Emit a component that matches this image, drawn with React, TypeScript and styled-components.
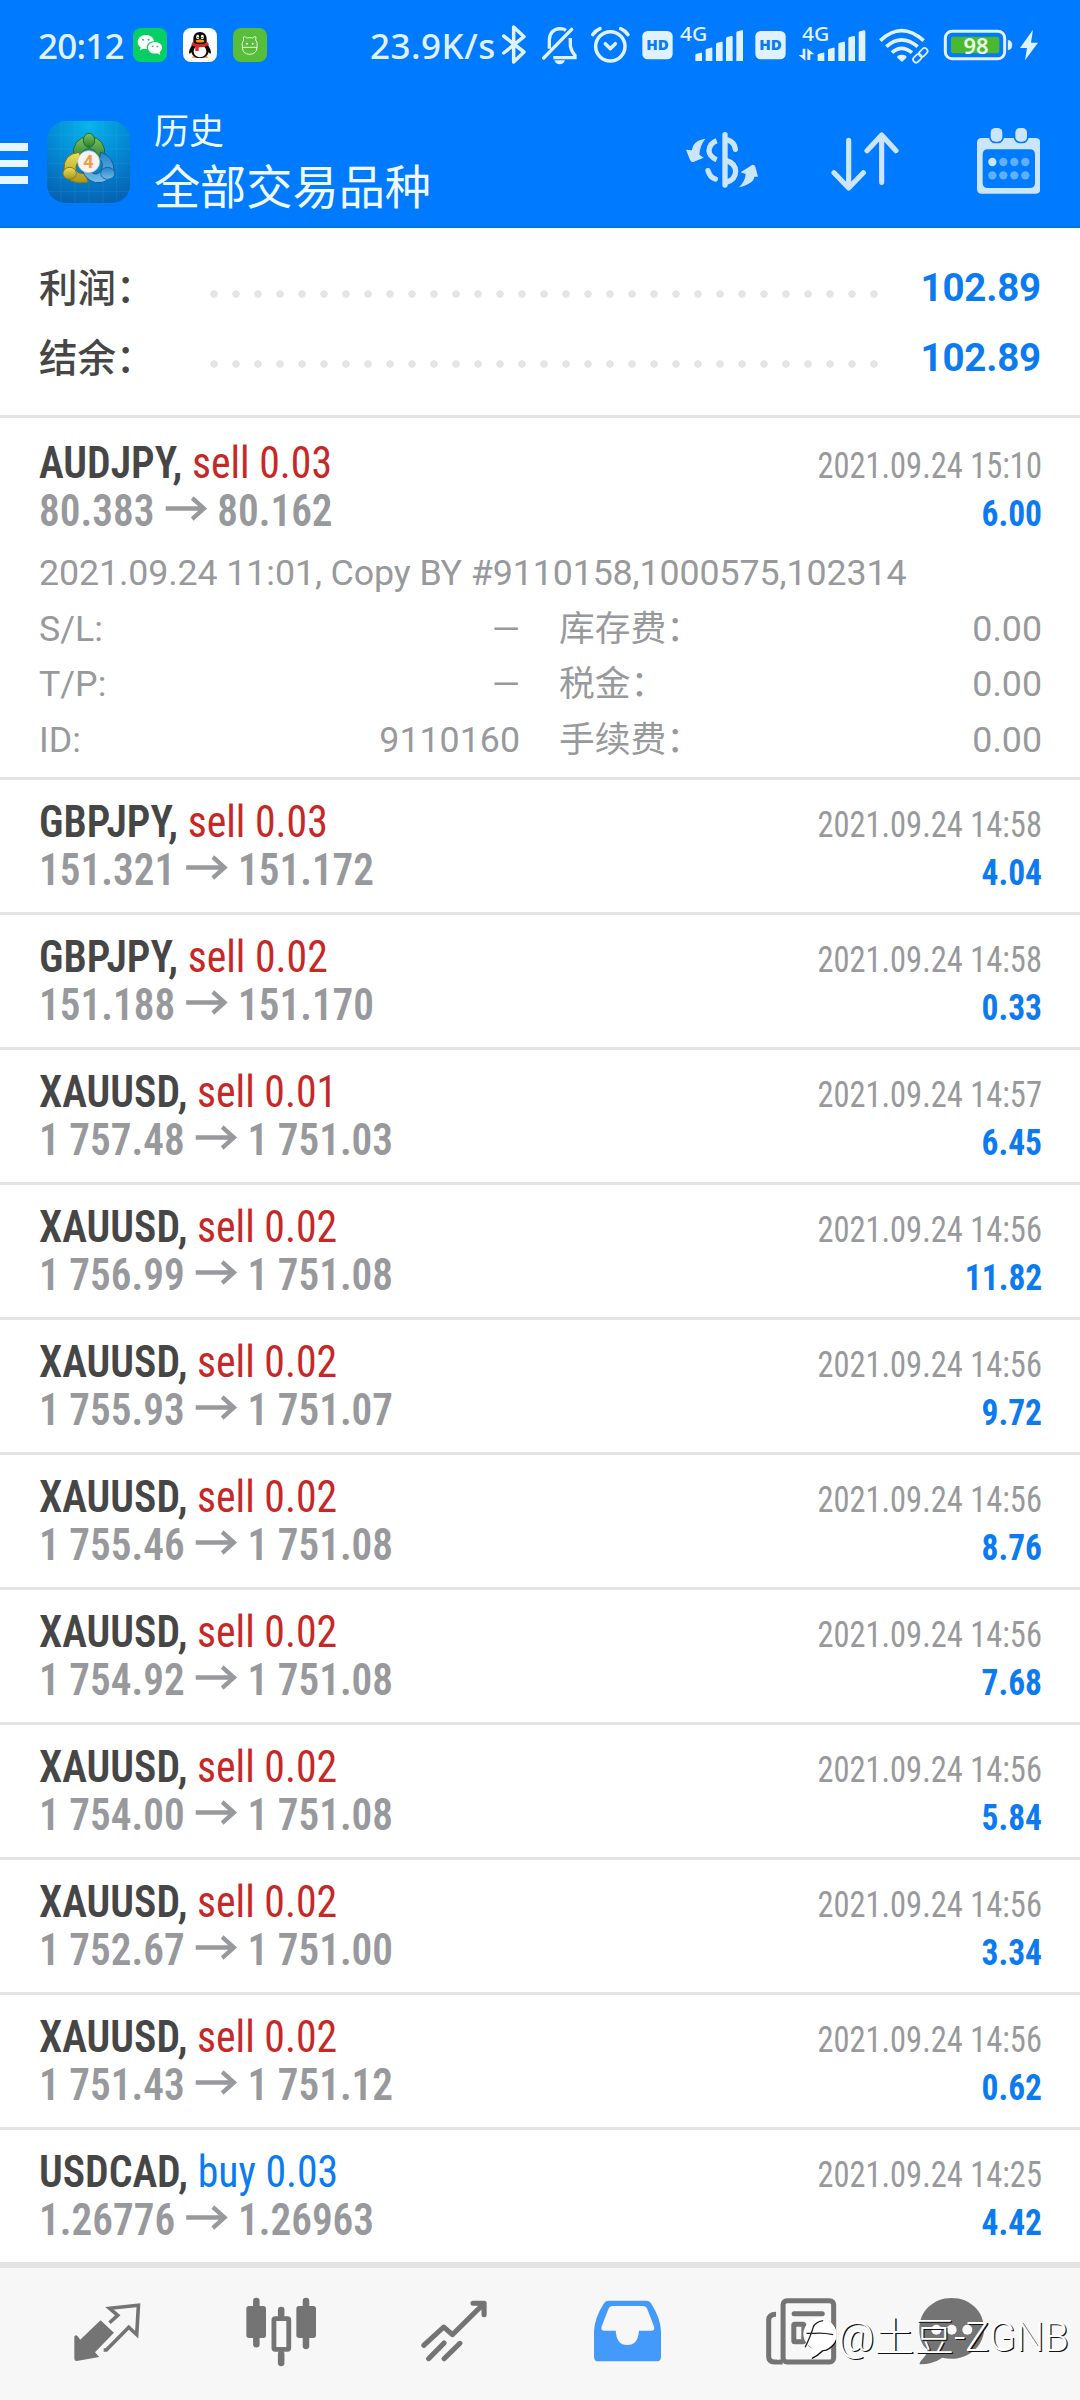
import React from 'react';
import styled, { createGlobalStyle } from 'styled-components';

const BLUE = '#007aff';
const INK = '#e0f2ff';
const TOOL = '#cce5ff';
const GREY = '#98999c';
const NAV = '#747474';

const Global = createGlobalStyle`
  *{box-sizing:border-box}
  body{margin:0;background:#fff}
  svg{display:block;flex:none}
`;

const Screen = styled.div`
  position: relative;
  width: 1080px;
  height: 2400px;
  display: flex;
  flex-direction: column;
  overflow: hidden;
  background: #fff;
  font-family: Roboto, 'Noto Sans CJK SC', sans-serif;
`;

const Header = styled.header`
  height: 228px;
  flex: none;
  background: ${BLUE};
  border-bottom: 2px solid #0073e6;
`;

const StatusBar = styled.div`
  height: 92px;
  padding: 24px 0 0 38px;
  display: flex;
  align-items: flex-start;
  font-family: 'Noto Sans', sans-serif;
  color: ${INK};
`;

const StatusText = styled.div<{ $w: number; $ml?: number; $ls?: number }>`
  width: ${p => p.$w}px;
  margin-left: ${p => p.$ml ?? 0}px;
  letter-spacing: ${p => p.$ls ?? 0}px;
  font-size: 35px;
  font-weight: 500;
  line-height: 44px;
  white-space: nowrap;
`;

const Glyph = styled.svg<{ $ml?: number }>`
  height: 42px;
  margin-left: ${p => p.$ml ?? 0}px;
  overflow: visible;
`;

const AppBar = styled.div`
  height: 134px;
  display: flex;
  align-items: flex-start;
`;

const Burger = styled.div`
  width: 28px;
  margin-top: 51px;
  display: flex;
  flex-direction: column;
  gap: 9px;
`;
const BurgerLine = styled.span`
  height: 7.6px;
  background: #e6f6ff;
`;

const Logo = styled.svg`
  margin: 29px 0 0 18.5px;
`;

const Titles = styled.div`
  width: 531px;
  margin: 19px 0 0 24px;
  color: #eefaff;
`;
const Subtitle = styled.div`
  font-size: 35px;
  line-height: 44px;
`;
const Title = styled.div`
  margin-top: 3px;
  font-size: 46.2px;
  line-height: 60px;
`;

const Tool = styled.svg<{ $mt: number; $ml?: number }>`
  margin-top: ${p => p.$mt}px;
  margin-left: ${p => p.$ml ?? 0}px;
`;

const Summary = styled.section`
  height: 190px;
  flex: none;
  padding: 25px 39px 0;
  border-bottom: 3px solid #e4e4e4;
`;
const SummaryRow = styled.div`
  height: 70px;
  line-height: 70px;
  font-size: 38.5px;
  display: flex;
`;
const SummaryLabel = styled.div`
  width: 163.5px;
  font-family: 'Noto Sans CJK SC', sans-serif;
  font-weight: 500;
  line-height: 65px;
  color: #464646;
`;
const Dots = styled.div`
  width: 682px;
  margin-top: 6px;
  height: 70px;
  background: radial-gradient(circle at 11px 35px, #e4e4e4 3.4px, transparent 4.1px) 0 0 / 22px 70px repeat-x;
`;
const SummaryValue = styled.div`
  flex: 1;
  text-align: right;
  font-weight: 700;
  letter-spacing: -0.2px;
  color: #0c7af0;
`;

const Deal = styled.section<{ $open?: boolean }>`
  height: ${p => (p.$open ? 362 : 135)}px;
  flex: none;
  padding: ${p => (p.$open ? 21 : 18)}px 38px 0 39px;
  border-bottom: 3px solid #e4e4e4;
`;
const Line = styled.div`
  height: 48px;
  display: flex;
  justify-content: space-between;
  align-items: baseline;
  font-family: 'Roboto Condensed', Roboto, sans-serif;
  font-size: 44px;
  line-height: 48px;
  white-space: pre;
`;
const Heading = styled.div`
  transform: scaleX(0.948);
  transform-origin: 0 0;
`;
const Pair = styled.span`
  font-weight: 600;
  color: #464646;
`;
const Side = styled.span<{ $buy: boolean }>`
  color: ${p => (p.$buy ? '#0c7af0' : '#c62828')};
`;
const Prices = styled.div`
  display: flex;
  align-items: baseline;
  font-weight: 600;
  color: ${GREY};
  transform: scaleX(0.937);
  transform-origin: 0 0;
`;
const Arrow = styled.svg`
  margin: 0 10px 0 12px;
  transform: translateY(-5px);
`;
const Time = styled.span`
  font-size: 36px;
  line-height: 40px;
  color: ${GREY};
  transform: scaleX(0.902);
  transform-origin: 100% 0;
`;
const Profit = styled.span`
  font-size: 36px;
  line-height: 40px;
  font-weight: 700;
  color: #0c7af0;
  transform: scaleX(0.93);
  transform-origin: 100% 0;
`;

const Details = styled.div`
  margin-top: 11px;
  font-size: 35.75px;
  line-height: 55.6px;
  color: ${GREY};
`;
const Comment = styled.div`
  letter-spacing: -0.1px;
`;
const DetailGrid = styled.div`
  display: grid;
  grid-template-columns: 481px 1fr;
  column-gap: 39px;
`;
const DetailCell = styled.div`
  display: flex;
  justify-content: space-between;
`;

const NavBar = styled.nav`
  flex: 1;
  display: grid;
  grid-template-columns: repeat(5, 173.3px) 129px;
  justify-items: center;
  align-items: start;
  padding: 30px 0 0 21px;
  border-top: 6px solid #e4e4e4;
  margin-top: -3px;
  background: #f7f7f7;
`;
const NavIcon = styled.svg`
  height: 68px;
  overflow: visible;
`;

const Watermark = styled.div`
  position: absolute;
  left: 798px;
  top: 2310px;
  display: flex;
  align-items: center;
  gap: 2px;
  font-size: 39.8px;
  line-height: 56px;
  font-weight: 300;
  color: #fff;
  text-shadow: 1.3px 1.3px 0.6px #111;
  white-space: nowrap;
`;

function HD({ ml }: { ml: number }) {
  return (
    <Glyph $ml={ml} width="31" viewBox="847 72 93 126">
      <rect x="848" y="93" width="91" height="85" rx="16" fill={INK} />
      <text x="893.5" y="150" fontSize="42" fontWeight="800" fontFamily="Open Sans" textAnchor="middle" textLength="68" lengthAdjust="spacingAndGlyphs" fill="#0a7af5">HD</text>
    </Glyph>
  );
}

const Bars = ({ x }: { x: number }) => (
  <g fill={INK}>
    {[[0, 158], [31, 143], [62, 125], [92, 108], [123, 91]].map(([dx, top]) => (
      <path key={dx} d={`M${x + dx} ${top + 8}q0 -4 4 -5l12 -3q4 -1 4 3V183h-20z`} />
    ))}
  </g>
);

function StatusIcons() {
  return (
    <>
      <Glyph $ml={6} width="28" viewBox="420 72 84 126" fill="none" stroke={INK} strokeWidth="10.5" strokeLinecap="round" strokeLinejoin="round">
        <path d="M431 108L492 156L461 186V81L492 110L431 159" />
      </Glyph>
      <Glyph $ml={12} width="39" viewBox="540 72 117 126" fill="none" stroke={INK} strokeWidth="10" strokeLinecap="round">
        <path d="M568 146V120Q570 88 600 86Q611 86 618 91M631 114V136Q632 150 645 166V173H580" strokeLinecap="butt" />
        <path d="M551 174L635 88" />
        <path d="M583 181h32q-4 12 -16 12t-16 -12z" fill={INK} stroke="none" />
      </Glyph>
      <Glyph $ml={11} width="41" viewBox="690 72 123 126" fill="none" stroke={INK} strokeWidth="10.5" strokeLinecap="round" strokeLinejoin="round">
        <circle cx="751" cy="139" r="44" />
        <path d="M736 131L751 146L766 131M698 104Q706 92 720 86M804 104Q796 92 782 86" />
      </Glyph>
      <HD ml={11} />
      <Glyph $ml={6} width="65" viewBox="957 72 195 126">
        <text x="960" y="123" fontSize="58" fontWeight="500" fontFamily="Noto Sans" textLength="82" lengthAdjust="spacingAndGlyphs" fill={INK}>4G</text>
        <Bars x={1006} />
      </Glyph>
      <HD ml={11} />
      <Glyph $ml={11} width="69" viewBox="228 72 207 126">
        <text x="243" y="123" fontSize="58" fontWeight="500" fontFamily="Noto Sans" textLength="82" lengthAdjust="spacingAndGlyphs" fill={INK}>4G</text>
        <path d="M245 146h8v36L233 165h12zM259 180v-35L280 163h-12v17z" fill={INK} />
        <Bars x={290} />
      </Glyph>
      <Glyph $ml={12} width="52" viewBox="471 72 156 126" fill="none" stroke={INK} strokeWidth="11">
        <path d="M478 122Q541 62 608 122M496 140Q541 99 590 140M513 158Q541 132 573 158" />
        <path d="M529 168q14 -8 27 0v5l-13 13l-14 -13z" fill={INK} stroke="none" />
        <g strokeWidth="5" transform="rotate(-45 598 166)">
          <rect x="571" y="157" width="29" height="18" rx="9" />
          <rect x="596" y="157" width="29" height="18" rx="9" />
        </g>
      </Glyph>
      <Glyph $ml={14} width="69" viewBox="669 72 207 126">
        <rect x="673" y="94" width="178" height="82" rx="20" fill="none" stroke={INK} strokeWidth="9" />
        <rect x="690" y="110" width="145" height="50" rx="6" fill="#4cb82e" />
        <path d="M861 121q12 0 12 14t-12 15z" fill={INK} stroke={INK} />
        <text x="765" y="161" fontSize="66" fontWeight="600" fontFamily="Noto Sans" textAnchor="middle" fill="#e9fbe9">98</text>
      </Glyph>
      <Glyph $ml={6} width="20" viewBox="894 72 60 126">
        <path d="M936 89L897 144H918L912 181L951 128H930z" fill={INK} />
      </Glyph>
    </>
  );
}

function NotificationIcons() {
  return (
    <>
      <Glyph width="34" viewBox="399 72 102 126">
        <rect x="399" y="84" width="102" height="102" rx="24" fill="#07cf63" />
        <path d="M437 105c14 0 24 8 25 19c-12 0 -22 8 -22 19l1 4c-5 0 -8 0 -12 -1l-9 5l2 -9c-6 -4 -9 -9 -9 -16c0 -12 11 -21 24 -21z" fill="#fff" />
        <path d="M465 126c12 0 21 7 21 17c0 5 -3 10 -7 13l2 9l-9 -5c-16 3 -28 -5 -28 -17c0 -10 9 -17 21 -17z" fill="#fff" />
        <g fill="#07cf63"><circle cx="429" cy="119" r="3" /><circle cx="446" cy="119" r="3" /><circle cx="458" cy="139" r="2.6" /><circle cx="472" cy="139" r="2.6" /></g>
      </Glyph>
      <Glyph $ml={16} width="34" viewBox="549 72 102 126">
        <rect x="549" y="84" width="102" height="102" rx="24" fill="#fff" />
        <path d="M579 168q-6 6 2 6h16v-8zM621 168q6 6 -2 6h-16v-8z" fill="#f5a21b" />
        <path d="M600 96c13 0 20 9 20 22v10c6 10 13 20 13 30c0 4 -3 4 -7 -2c-3 12 -12 18 -26 18s-23 -6 -26 -18c-4 6 -7 6 -7 2c0 -10 7 -20 13 -30v-10c0 -13 7 -22 20 -22z" fill="#0b0b0b" />
        <ellipse cx="600" cy="154" rx="19" ry="18" fill="#fff" />
        <ellipse cx="593" cy="111" rx="4.5" ry="7" fill="#fff" /><ellipse cx="607" cy="111" rx="4.5" ry="7" fill="#fff" />
        <circle cx="594" cy="112" r="2" /><circle cx="606" cy="112" r="2" />
        <ellipse cx="600" cy="123" rx="13" ry="4.5" fill="#f5a21b" />
        <path d="M577 127q23 12 46 0l4 8q-14 8 -31 7v11h-10v-13l-12 -5z" fill="#e0262a" />
      </Glyph>
      <Glyph $ml={16} width="34" viewBox="699 72 102 126">
        <rect x="699" y="84" width="102" height="102" rx="24" fill="#58bd39" />
        <g fill="none" stroke="#e3f8d9" strokeWidth="3">
          <path d="M727 142q-3 -14 4 -22l-1 -9q4 -4 10 3q9 -2 18 0q6 -7 10 -3l-1 9q7 8 4 22q-1 20 -22 21q-21 -1 -22 -21zM726 142h46" />
        </g>
        <circle cx="741" cy="131" r="3" fill="#fff" /><circle cx="758" cy="131" r="3" fill="#fff" />
      </Glyph>
    </>
  );
}

function AppLogo() {
  return (
    <Logo width="83.4" height="82" viewBox="139 363 250 246">
      <defs>
        <radialGradient id="lbg" cx="0.5" cy="0.05" r="1"><stop offset="0" stopColor="#08b4ea" /><stop offset="0.5" stopColor="#0488d4" /><stop offset="1" stopColor="#0560b0" /></radialGradient>
        <linearGradient id="lg" x1="0" y1="0" x2="0" y2="1"><stop offset="0" stopColor="#7fc562" /><stop offset="1" stopColor="#257d30" /></linearGradient>
        <linearGradient id="ly" x1="0" y1="0" x2="0" y2="1"><stop offset="0" stopColor="#ece05c" /><stop offset="1" stopColor="#a8951c" /></linearGradient>
        <linearGradient id="lb" x1="0" y1="0" x2="0" y2="1"><stop offset="0" stopColor="#2483c8" /><stop offset="1" stopColor="#74bce8" /></linearGradient>
      </defs>
      <rect x="139" y="363" width="250" height="246" rx="56" fill="url(#lbg)" />
      <path d="M181 366V606M223 363V609M265 363V609M307 363V609M348 366V606M139 405H389M139 447H389M139 490H389M139 532H389M139 574H389" stroke="#5cc8f5" strokeOpacity="0.2" strokeWidth="2" />
      <path d="M218 474Q212 412 265 410Q318 412 312 474L290 480Q292 448 265 446Q238 448 240 480z" fill="url(#lg)" stroke="#1e6b32" strokeWidth="3" />
      <path d="M236 457Q186 462 190 512Q198 556 262 548L256 520Q222 524 226 500Q228 484 242 480z" fill="url(#ly)" stroke="#76701c" strokeWidth="3" />
      <path d="M300 456Q340 470 340 512Q328 552 284 548Q256 540 246 514L270 516Q292 532 304 506Q308 484 296 478z" fill="url(#lb)" stroke="#14599a" strokeWidth="3" />
      <ellipse cx="265" cy="421" rx="17" ry="21" fill="url(#lg)" stroke="#1f6e2d" strokeWidth="3" />
      <ellipse cx="207" cy="520" rx="20" ry="18" fill="url(#ly)" stroke="#857b1d" strokeWidth="3" />
      <ellipse cx="321" cy="520" rx="21" ry="18" fill="url(#lb)" stroke="#1767a8" strokeWidth="3" />
      <circle cx="264" cy="485" r="33" fill="#f5f3f0" stroke="#b9b9b0" strokeWidth="2" />
      <text x="263" y="504" fontSize="54" fontWeight="700" fontFamily="Roboto" textAnchor="middle" fill="#f29a4a">4</text>
    </Logo>
  );
}

type DealData = { pair: string; side: string; from: string; to: string; time: string; profit: string };
const d = (pair: string, side: string, from: string, to: string, time: string, profit: string): DealData =>
  ({ pair, side, from, to, time: `2021.09.24 ${time}`, profit });

const deals: DealData[] = [
  d('AUDJPY', 'sell 0.03', '80.383', '80.162', '15:10', '6.00'),
  d('GBPJPY', 'sell 0.03', '151.321', '151.172', '14:58', '4.04'),
  d('GBPJPY', 'sell 0.02', '151.188', '151.170', '14:58', '0.33'),
  d('XAUUSD', 'sell 0.01', '1 757.48', '1 751.03', '14:57', '6.45'),
  d('XAUUSD', 'sell 0.02', '1 756.99', '1 751.08', '14:56', '11.82'),
  d('XAUUSD', 'sell 0.02', '1 755.93', '1 751.07', '14:56', '9.72'),
  d('XAUUSD', 'sell 0.02', '1 755.46', '1 751.08', '14:56', '8.76'),
  d('XAUUSD', 'sell 0.02', '1 754.92', '1 751.08', '14:56', '7.68'),
  d('XAUUSD', 'sell 0.02', '1 754.00', '1 751.08', '14:56', '5.84'),
  d('XAUUSD', 'sell 0.02', '1 752.67', '1 751.00', '14:56', '3.34'),
  d('XAUUSD', 'sell 0.02', '1 751.43', '1 751.12', '14:56', '0.62'),
  d('USDCAD', 'buy 0.03', '1.26776', '1.26963', '14:25', '4.42'),
];

const details: [string, string][] = [
  ['S/L:', '—'], ['库存费：', '0.00'],
  ['T/P:', '—'], ['税金：', '0.00'],
  ['ID:', '9110160'], ['手续费：', '0.00'],
];

function DealRow({ deal, open }: { deal: DealData; open?: boolean }) {
  return (
    <Deal $open={open}>
      <Line>
        <Heading><Pair>{deal.pair}, </Pair><Side $buy={deal.side.startsWith('buy')}>{deal.side}</Side></Heading>
        <Time>{deal.time}</Time>
      </Line>
      <Line>
        <Prices>
          {deal.from}
          <Arrow width="45" height="25" viewBox="0 0 45 25" fill="none" stroke={GREY} strokeWidth="4.4">
            <path d="M0 12.5H42M28.5 2L41 12.5L28.5 23" />
          </Arrow>
          {deal.to}
        </Prices>
        <Profit>{deal.profit}</Profit>
      </Line>
      {open && (
        <Details>
          <Comment>2021.09.24 11:01, Copy BY #9110158,1000575,102314</Comment>
          <DetailGrid>
            {details.map(([k, v]) => <DetailCell key={k}><span>{k}</span><span>{v}</span></DetailCell>)}
          </DetailGrid>
        </Details>
      )}
    </Deal>
  );
}

export default function App() {
  return (
    <Screen>
      <Global />
      <Header>
        <StatusBar>
          <StatusText $w={95} $ls={-0.8}>20:12</StatusText>
          <NotificationIcons />
          <StatusText $ml={103} $w={124} $ls={0.5}>23.9K/s</StatusText>
          <StatusIcons />
        </StatusBar>
        <AppBar>
          <Burger><BurgerLine /><BurgerLine /><BurgerLine /></Burger>
          <AppLogo />
          <Titles><Subtitle>历史</Subtitle><Title>全部交易品种</Title></Titles>
          <Tool $mt={40} $ml={1} width="72" height="56" viewBox="48 52 216 168" fill={TOOL}>
            <path d="M106 72C80 76 68 88 66 107L48 105L60 136Q64 144 72 141L101 129L88 120C90 100 95 86 106 72z" />
            <path d="M207 218C238 210 252 200 253 186L264 186L256 156Q253 149 246 151L212 173L227 178C225 196 218 207 207 218z" />
            <g fill="none" stroke={TOOL} strokeWidth="16" strokeLinecap="round">
              <path d="M165 60V211" />
              <path d="M172 75Q194 82 196 104M168 137Q197 146 197 171Q196 196 168 203M114 168Q120 188 136 193" />
              <path d="M140 78Q118 86 117 108Q118 126 140 135" strokeLinecap="butt" />
            </g>
          </Tool>
          <Tool $mt={40} $ml={73} width="68" height="59" viewBox="333 396 204 177" fill="none" stroke={TOOL} strokeWidth="15.5" strokeLinecap="round" strokeLinejoin="round">
            <path d="M386 421V563M342 518L386 564L430 518M485 547V406M441 452L485 405L528 452" />
          </Tool>
          <Tool $mt={35.5} $ml={78} width="63.5" height="66" viewBox="770 383 190.5 198">
            <path fillRule="evenodd" d="M784 413H946Q960 413 960 428V565Q960 580 946 580H784Q770 580 770 565V428Q770 413 784 413zM803 447Q787 447 787 463V547Q787 563 803 563H928Q944 563 944 547V463Q944 447 928 447z" fill={TOOL} />
            {[811, 885].map(x => <rect key={x} x={x} y="383" width="35" height="41" rx="14" fill={TOOL} stroke={BLUE} strokeWidth="10" paintOrder="stroke" />)}
            {[485, 525].map(y => [816, 849, 882, 915].map(x => <circle key={`${x}${y}`} cx={x} cy={y} r="12.5" fill={x === 816 && y === 485 ? '#c8e6ff' : '#5fb0ff'} />))}
          </Tool>
        </AppBar>
      </Header>

      <Summary>
        {['利润：', '结余：'].map(label => (
          <SummaryRow key={label}>
            <SummaryLabel>{label}</SummaryLabel>
            <Dots />
            <SummaryValue>102.89</SummaryValue>
          </SummaryRow>
        ))}
      </Summary>

      {deals.map((deal, i) => <DealRow key={i} deal={deal} open={i === 0} />)}

      <NavBar>
        <NavIcon width="66.5" viewBox="218 594 193 204" preserveAspectRatio="none">
          <path d="M223 706Q226 704 236 719L295 661L334 698L279 757L291 771L226 783Q219 783 219 776V709z" fill={NAV} />
          <path d="M321 668L345 646L321 625L405 616L400 704L377 682L312 750H304" fill="none" stroke={NAV} strokeWidth="10.5" />
        </NavIcon>
        <NavIcon width="70" viewBox="714 594 203 204" preserveAspectRatio="none">
          <g stroke={NAV} strokeWidth="19" strokeLinecap="round"><path d="M744 603V733M888 603V738M816 630V645M816 762V789" /></g>
          <rect x="715" y="618" width="57" height="96" rx="8" fill={NAV} />
          <rect x="860" y="618" width="57" height="96" rx="8" fill={NAV} />
          <rect x="795" y="656" width="43" height="92" rx="4" fill="#f7f7f7" stroke={NAV} strokeWidth="14" />
        </NavIcon>
        <NavIcon width="65.5" viewBox="1223 594 190 204" preserveAspectRatio="none" fill="none" stroke={NAV} strokeWidth="15" strokeLinecap="round" strokeLinejoin="round">
          <path d="M1231 736L1289 681L1314 704L1402 614M1374 610H1406V644M1245 776L1290 729M1290 776L1336 730" />
        </NavIcon>
        <NavIcon width="67" viewBox="157 594 194 204" preserveAspectRatio="none">
          <path fillRule="evenodd" fill="#449afb" d="M200 602H308Q318 602 323 611Q350 655 351 694V770Q351 784 338 784H170Q157 784 157 770V694Q158 655 185 611Q190 602 200 602zM210 618Q202 618 199 626L179 680Q176 692 187 692H220Q222 735 253 735Q285 735 287 692H322Q334 692 331 680L311 626Q308 618 300 618z" />
        </NavIcon>
        <NavIcon width="70" viewBox="48 83 209 204" preserveAspectRatio="none" fill="none" stroke={NAV} strokeWidth="15">
          <path d="M78 132Q56 132 56 150V258Q56 275 73 275H98" />
          <path d="M84 127V268" stroke="#f7f7f7" strokeWidth="6" />
          <rect x="99" y="91" width="151" height="184" rx="12" />
          <path d="M132 130H216" strokeLinecap="round" />
          <rect x="131" y="162" width="30" height="52" rx="3" />
          <path d="M184 162H222M184 188H222M184 214H222" />
        </NavIcon>
        <NavIcon width="65" viewBox="510 83 195 204" preserveAspectRatio="none">
          <path d="M608 83C663 83 705 123 705 175C705 234 645 278 580 262Q553 281 512 282Q510 276 524 262Q535 250 536 238C516 222 511 200 511 175C511 123 553 83 608 83z" fill={NAV} />
          <g fill="#f7f7f7"><circle cx="562" cy="178" r="15" /><circle cx="608" cy="178" r="15" /><circle cx="655" cy="178" r="15" /></g>
        </NavIcon>
      </NavBar>

      <Watermark>
        <svg width="38" height="43" viewBox="148 153 111 129">
          <path d="M206 160A51 48 0 1 1 222 256Q206 272 188 280L190 248A51 48 0 0 1 206 160z" fill="#111" />
          <path d="M203 157A51 48 0 1 1 219 253Q203 269 185 277L187 245A51 48 0 0 1 203 157z" fill="#fff" />
          <path d="M168 244Q186 206 192 184Q198 168 222 164M172 202H196Q222 200 252 206" fill="none" stroke="#222" strokeWidth="4" />
        </svg>
        @土豆-ZGNB
      </Watermark>
    </Screen>
  );
}
